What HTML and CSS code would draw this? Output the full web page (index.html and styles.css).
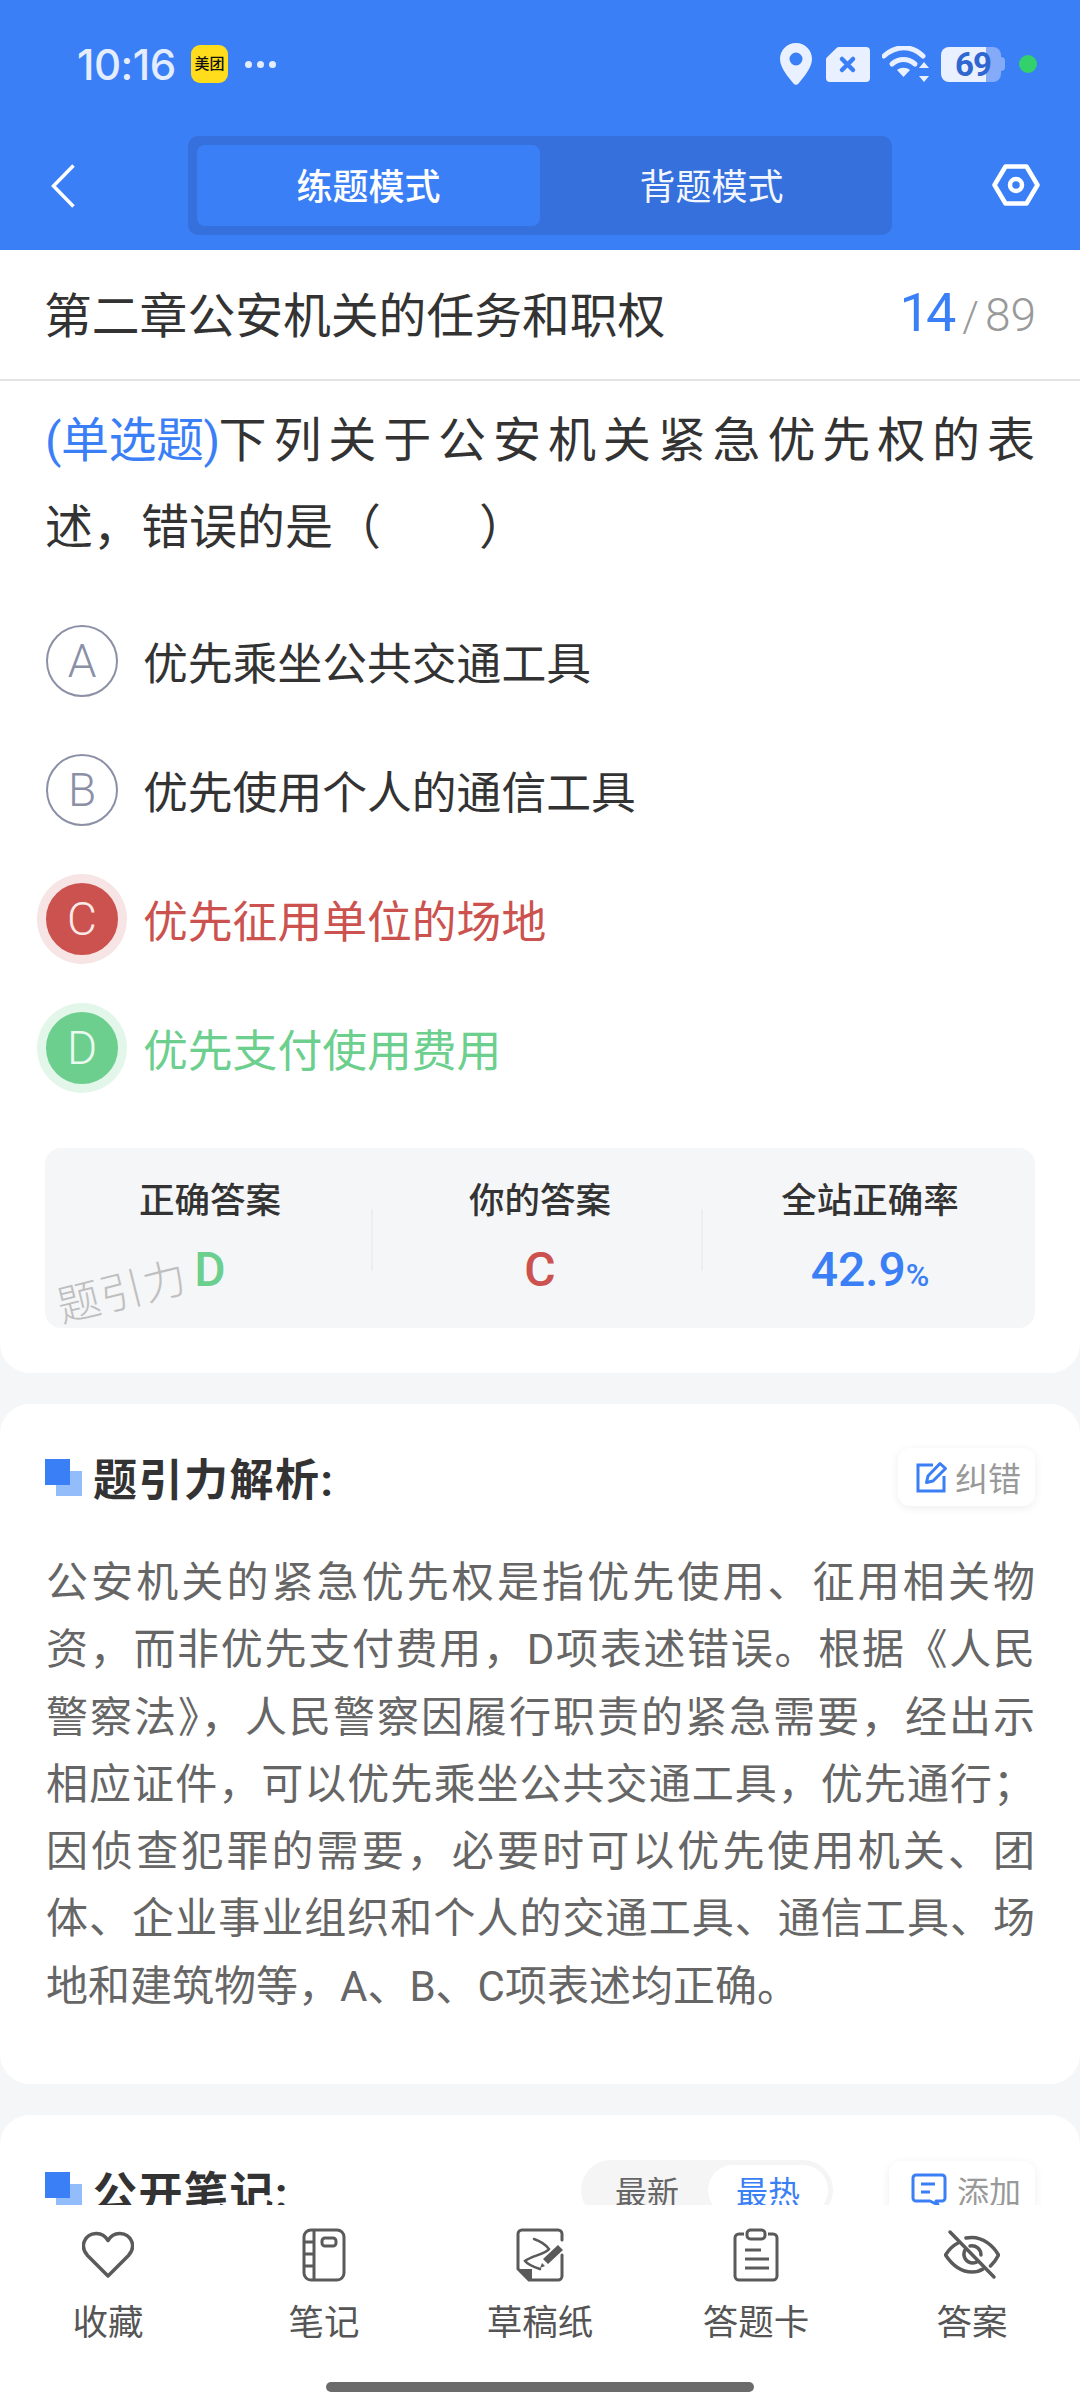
FILE: index.html
```html
<!DOCTYPE html>
<html lang="zh-CN">
<head>
<meta charset="utf-8">
<title>练题模式</title>
<link rel="stylesheet" href="styles.css">
</head>
<body>
<div class="screen">
  <header class="top">
    <div class="status">
      <div class="status-left">
        <span class="time">10:16</span>
        <span class="app-badge"><span class="mt">美团</span></span>
        <span class="more"><i></i><i></i><i></i></span>
      </div>
      <div class="status-right">
        <svg class="pin" width="32" height="42" viewBox="0 0 32 42"><path fill-rule="evenodd" fill="#e9f0ff" d="M16 0C7 0 0 7 0 16c0 9 9 19 13.500 24.500 1.300 1.600 3.700 1.600 5 0C23 35 32 25 32 16 32 7 25 0 16 0zm0 9.500a6.500 6.500 0 1 1 0 13 6.500 6.500 0 0 1 0-13z"/></svg>
        <svg class="sim" width="44" height="35" viewBox="0 0 44 35"><path fill="#e9f0ff" d="M13 0h27a4 4 0 0 1 4 4v27a4 4 0 0 1-4 4H4a4 4 0 0 1-4-4V12.500a3 3 0 0 1 1-2.200L10.500 1A4 4 0 0 1 13 0z"/><path stroke="#3b7ff6" stroke-width="4.500" stroke-linecap="round" d="M16 12l11 11M27 12L16 23"/></svg>
        <svg class="wifi" width="47" height="36" viewBox="0 0 47 36"><g fill="none" stroke="#e9f0ff" stroke-width="5" stroke-linecap="round"><path d="M2 10C14-1 30-1 41 10"/><path d="M10 18c7-6 16-6 23 0"/></g><path fill="#e9f0ff" d="M15 24c4-3 9-3 13 0l-6.500 7z"/><path fill="#e9f0ff" d="M42 16l5 6H37zM42 36l5-6H37z"/></svg>
        <div class="battery"><span class="batt-fill"><span class="batt-num">69</span></span><span class="batt-rest"></span><span class="batt-cap"></span></div>
        <span class="cam-dot"></span>
      </div>
    </div>
    <nav class="bar">
      <svg class="back" width="24" height="44" viewBox="0 0 24 44"><path fill="none" stroke="#fff" stroke-width="3.500" d="M22.500 1.500L2.500 22l20 20.500"/></svg>
      <div class="seg">
        <span class="seg-item seg-on">练题模式</span>
        <span class="seg-item">背题模式</span>
      </div>
      <svg class="gear" width="48" height="42" viewBox="0 0 48 42"><path fill="none" stroke="#fff" stroke-width="4.500" stroke-linejoin="round" d="M13.500 2.500h21L45.500 21l-11 18.500h-21L2.500 21z"/><circle cx="24" cy="21" r="6" fill="none" stroke="#fff" stroke-width="4.500"/></svg>
    </nav>
  </header>

  <main class="content">
    <section class="card card-q">
      <div class="title-row">
        <h1 class="chapter">第二章公安机关的任务和职权</h1>
        <div class="count"><span class="cur">14</span><span class="sep">/</span><span class="tot">89</span></div>
      </div>
      <div class="question">
        <span class="ln"><span class="qtype">(单选题)</span>下列关于公安机关紧急优先权的表</span>
        <span class="ln ln-end">述，错误的是（&emsp;&emsp;）</span>
      </div>
      <ul class="options">
        <li class="opt"><span class="dot">A</span><span>优先乘坐公共交通工具</span></li>
        <li class="opt"><span class="dot">B</span><span>优先使用个人的通信工具</span></li>
        <li class="opt opt-bad"><span class="dot">C</span><span>优先征用单位的场地</span></li>
        <li class="opt opt-good"><span class="dot">D</span><span>优先支付使用费用</span></li>
      </ul>
      <div class="stats">
        <div class="stat"><span class="stat-label">正确答案</span><span class="stat-val good">D</span></div>
        <div class="stat"><span class="stat-label">你的答案</span><span class="stat-val bad">C</span></div>
        <div class="stat"><span class="stat-label">全站正确率</span><span class="stat-val blue">42.9<small>%</small></span></div>
        <span class="watermark">题引力</span>
      </div>
    </section>

    <section class="card card-a">
      <div class="head">
        <h2 class="head-title"><span class="mark"></span>题引力解析:</h2>
        <span class="chip">
          <svg width="32" height="32" viewBox="0 0 32 32"><g fill="none" stroke="#3b7ff6" stroke-width="3"><path d="M17 4H2v26h26V15"/><path d="M12 15L24 2.500l5.500 5L17 20l-6.500 1.500z" stroke-linejoin="round"/></g></svg>
          纠错
        </span>
      </div>
      <p class="analysis">
        <span class="ln">公安机关的紧急优先权是指优先使用、征用相关物</span>
        <span class="ln">资，而非优先支付费用，D项表述错误。根据《人民</span>
        <span class="ln">警察法》，人民警察因履行职责的紧急需要，经出示</span>
        <span class="ln">相应证件，可以优先乘坐公共交通工具，优先通行；</span>
        <span class="ln">因侦查犯罪的需要，必要时可以优先使用机关、团</span>
        <span class="ln">体、企业事业组织和个人的交通工具、通信工具、场</span>
        <span class="ln ln-end">地和建筑物等，A、B、C项表述均正确。</span>
      </p>
    </section>

    <section class="card card-n">
      <div class="head">
        <h2 class="head-title"><span class="mark"></span>公开笔记:</h2>
        <div class="head-tools">
          <div class="toggle"><span class="tog">最新</span><span class="tog tog-on">最热</span></div>
          <span class="chip chip-add">
            <svg width="36" height="34" viewBox="0 0 36 34"><g fill="none" stroke="#3b7ff6" stroke-width="3"><path d="M5 2h26a3 3 0 0 1 3 3v20a3 3 0 0 1-3 3h-6l2 4-8-4H5a3 3 0 0 1-3-3V5a3 3 0 0 1 3-3z" stroke-linejoin="round"/><path d="M10 11h14M10 19h9"/></g></svg>
            添加
          </span>
        </div>
      </div>
    </section>
  </main>

  <footer class="tabs">
    <div class="tab-row">
      <div class="tab">
        <svg width="52" height="48" viewBox="0 0 52 48"><path fill="none" stroke="#5a5a5a" stroke-width="3.500" stroke-linejoin="round" d="M26 45L5.500 24.500C-3 15 3 3 14 2.500c5-.2 9 2 12 7 3-5 7-7.200 12-7 11 .5 17 12.500 8.500 22z"/></svg>
        <span>收藏</span>
      </div>
      <div class="tab">
        <svg width="44" height="54" viewBox="0 0 44 54"><g fill="none" stroke="#5a5a5a" stroke-width="3"><rect x="2" y="2" width="40" height="50" rx="7"/><path d="M12 2v50M2 14h10M2 26h10M2 38h10"/><rect x="20" y="10" width="14" height="8" rx="3"/></g></svg>
        <span>笔记</span>
      </div>
      <div class="tab">
        <svg width="48" height="54" viewBox="0 0 48 54"><g fill="none" stroke="#5a5a5a" stroke-width="3" stroke-linecap="round"><path d="M46 12V6a4 4 0 0 0-4-4H6a4 4 0 0 0-4 4v35l11 11h29a4 4 0 0 0 4-4V27"/><path d="M18 11c6 2 11 5 15 10-3 5-18 7-24 12 3 4 9 6 15 8" stroke-width="2.500"/></g><path fill="#5a5a5a" d="M3 41h13v11h-3z"/><path fill="#5a5a5a" d="M42 17l5 5-15 14-5-5zM29 38l-5 2 2-5z"/></svg>
        <span>草稿纸</span>
      </div>
      <div class="tab">
        <svg width="46" height="54" viewBox="0 0 46 54"><g fill="none" stroke="#5a5a5a" stroke-width="3"><path d="M11 6H6a4 4 0 0 0-4 4v38a4 4 0 0 0 4 4h34a4 4 0 0 0 4-4V10a4 4 0 0 0-4-4h-5"/><rect x="14" y="2" width="18" height="9" rx="3.500"/><path d="M12 22h16M12 31h24M12 40h24"/></g></svg>
        <span>答题卡</span>
      </div>
      <div class="tab">
        <svg width="56" height="48" viewBox="0 0 56 48"><g fill="none" stroke="#5a5a5a" stroke-width="3.500" stroke-linecap="round"><path d="M14 12C8 15 4 20 1.500 24c6 9 15 17 26.500 17 4 0 8-1 11-3M22 7c2-.5 4-.5 6-.5 11 0 21 8 26.500 17.500-2 4-5 8-8 11"/><path d="M6 1l44 45"/><path d="M21 19c-3 6 1 13 8 13 2 0 3-.5 5-1.500M26 15c6-1 11 3 11 9"/></g></svg>
        <span>答案</span>
      </div>
    </div>
    <div class="home"></div>
  </footer>
</div>
</body>
</html>
```

FILE: styles.css
```css
* { box-sizing: border-box; }
html, body { margin: 0; padding: 0; }
body {
  width: 1080px;
  height: 2400px;
  overflow: hidden;
  background: #f5f6f8;
  font-family: "Roboto", "Noto Sans CJK SC", sans-serif;
  color: #333;
}
h1, h2, p, ul { margin: 0; padding: 0; font-weight: 400; }
ul { list-style: none; }

.screen { position: relative; width: 1080px; height: 2400px; overflow: hidden; }

/* header */
.top { height: 250px; background: #3b7ff6; }
.status {
  height: 136px;
  padding: 42px 43px 0 77px;
  display: flex;
  justify-content: space-between;
  align-items: flex-start;
}
.status-left { display: flex; align-items: center; height: 44px; }
.time { font-family: "Inter", sans-serif; font-size: 42px; font-weight: 500; color: #e4edff; letter-spacing: -0.500px; width: 114px; white-space: nowrap; }
.app-badge {
  width: 37px; height: 38px; border-radius: 9px;
  background: #ffdd1c;
  display: flex; align-items: center; justify-content: center;
}
.mt { font-size: 15px; line-height: 1; color: #111; white-space: nowrap; font-weight: 500; }
.more { display: flex; gap: 5px; margin-left: 17px; }
.more i { width: 7px; height: 7px; border-radius: 50%; background: #e4edff; }
.status-right { display: flex; align-items: center; height: 44px; }
.pin { margin-right: 14px; }
.sim { margin-right: 12px; }
.wifi { margin-right: 12px; }
.battery { position: relative; display: flex; width: 64px; height: 35px; margin-right: 14px; }
.batt-fill {
  width: 45px; height: 35px; border-radius: 8px 0 0 8px;
  background: #e9f0ff; display: block; position: relative;
}
.batt-num {
  position: absolute; left: 14px; top: 0;
  font-size: 33px; line-height: 35px; font-weight: 700; color: #2f66cf; letter-spacing: -1px;
}
.batt-rest { width: 15px; height: 35px; border-radius: 0 8px 8px 0; background: #84aaf8; }
.batt-cap { width: 4px; height: 14px; margin-top: 10px; border-radius: 0 4px 4px 0; background: #84aaf8; }
.cam-dot { width: 18px; height: 18px; border-radius: 50%; background: #33d16b; }

.bar { height: 99px; position: relative; display: flex; align-items: center; justify-content: center; }
.back { position: absolute; left: 51px; top: 28px; }
.gear { position: absolute; left: 992px; top: 28px; }
.seg {
  width: 704px; height: 99px; padding: 9px;
  background: #3570dc; border-radius: 10px;
  display: flex;
}
.seg-item {
  flex: 1; display: flex; align-items: center; justify-content: center;
  font-size: 36px; color: #f2f6ff; border-radius: 8px;
  padding-bottom: 3px;
}
.seg-on { background: #3b7ff6; color: #fff; font-weight: 500; }

/* cards */
.card { background: #fff; border-radius: 30px; margin-bottom: 31px; }
.card-q { height: 1123px; border-radius: 0 0 30px 30px; }
.title-row {
  height: 131px;
  padding: 0 44px 5px 44px;
  display: flex; align-items: center; justify-content: space-between;
  border-bottom: 2px solid #e4e4e4;
}
.chapter { font-size: 47.800px; color: #333; }
.count { display: flex; align-items: baseline; }
.cur { font-size: 54px; color: #3b7ff6; letter-spacing: -4px; }
.sep { font-size: 42px; color: #999; margin: 0 6px 0 10px; font-weight: 300; }
.tot { font-size: 46px; color: #999; font-weight: 300; }

.ln { display: block; text-align: justify; text-align-last: justify; }
.ln-end { text-align: left; text-align-last: left; }

.question { padding: 16px 45px 0 45px; font-size: 48px; line-height: 87px; color: #333; }
.qtype { color: #3b7ff6; display: inline-block; margin-right: -8px; letter-spacing: -0.500px; }

.options { margin-top: 54px; padding-left: 46px; display: flex; flex-direction: column; gap: 57px; }
.opt { height: 72px; display: flex; align-items: center; gap: 25px; font-size: 44.800px; color: #333; }
.opt > span:last-child { padding-bottom: 2px; }
.dot {
  width: 72px; height: 72px; border-radius: 50%;
  border: 2px solid #8c90a6; color: #8c90a6;
  display: flex; align-items: center; justify-content: center;
  font-size: 46px; font-weight: 300;
  flex: none;
}
.opt-bad { color: #cb524e; }
.opt-bad .dot { background: #cb524e; border-color: #cb524e; color: #fbe9e8; box-shadow: 0 0 0 9px #f6e5e4; }
.opt-good { color: #6ccf8e; }
.opt-good .dot { background: #6ccf8e; border-color: #6ccf8e; color: #eafaf0; box-shadow: 0 0 0 9px #e2f6ea; }

.stats {
  position: relative;
  margin: 64px 45px 0;
  height: 180px;
  background: #f5f6f8;
  border-radius: 16px;
  display: flex;
  padding-top: 30px;
}
.stat {
  flex: 1; display: flex; flex-direction: column; align-items: center;
  position: relative;
}
.stat + .stat::before {
  content: ""; position: absolute; left: -4px; top: 31px; width: 2px; height: 62px; background: #eceef0;
}
.stat-label { font-size: 35.500px; line-height: 46px; font-weight: 500; color: #333; }
.stat-val { font-size: 48px; line-height: 56px; font-weight: 500; margin-top: 18px; }
.stat-val small { font-size: 32px; }
.good { color: #6ccf8e; }
.bad { color: #cb524e; }
.blue { color: #3b7ff6; }
.watermark {
  position: absolute; left: 13px; top: 132px;
  font-size: 43px; line-height: 56px; color: #bfbfbf;
  transform: rotate(-14deg); transform-origin: left center;
  font-weight: 300;
  letter-spacing: 1px;
}

.card-a { height: 680px; padding: 43px 45px 0 45px; }
.card-n { height: 300px; padding: 45px 45px 0 45px; }
.head { display: flex; align-items: center; justify-content: space-between; height: 60px; }
.head-title { display: flex; align-items: center; font-size: 44px; font-weight: 700; color: #333; letter-spacing: 1.500px; }
.mark { position: relative; width: 37px; height: 37px; margin-right: 11px; display: block; }
.mark::before { content: ""; position: absolute; left: 0; top: 0; width: 25px; height: 26px; background: #3b7ff6; z-index: 1; }
.mark::after { content: ""; position: absolute; left: 11px; top: 12px; width: 26px; height: 25px; background: #93bcfb; }
.chip {
  display: flex; align-items: center; gap: 7px;
  height: 58px; padding: 0 14px 0 18px;
  background: #fff; border-radius: 12px;
  box-shadow: 0 2px 10px rgba(0,0,0,.07);
  font-size: 33px; color: #999;
}
.analysis { margin-top: 42px; font-size: 42px; line-height: 67.300px; color: #666; padding-left: 1px; }

.head-tools { display: flex; align-items: center; gap: 56px; }
.toggle { width: 252px; height: 60px; padding: 5px; border-radius: 30px; background: #f5f5f5; display: flex; }
.tog { flex: 1; display: flex; align-items: center; justify-content: center; font-size: 32px; color: #666; border-radius: 30px; }
.tog-on { background: #fff; color: #3b7ff6; flex: 0 0 120px; }
.chip-add { padding: 0 14px 0 22px; gap: 10px; font-size: 32px; }

/* bottom bar */
.tabs {
  position: absolute; left: 0; bottom: 0; width: 1080px; height: 195px;
  background: #fff;
}
.tab-row { display: flex; padding-top: 22px; }
.tab {
  flex: 1; display: flex; flex-direction: column; align-items: center;
}
.tab svg { height: 56px; display: block; }
.tab span { margin-top: 17px; font-size: 35.500px; line-height: 46px; color: #555; }
.home { position: absolute; left: 326px; top: 177px; width: 428px; height: 10px; border-radius: 5px; background: #6b6b6b; }
```
